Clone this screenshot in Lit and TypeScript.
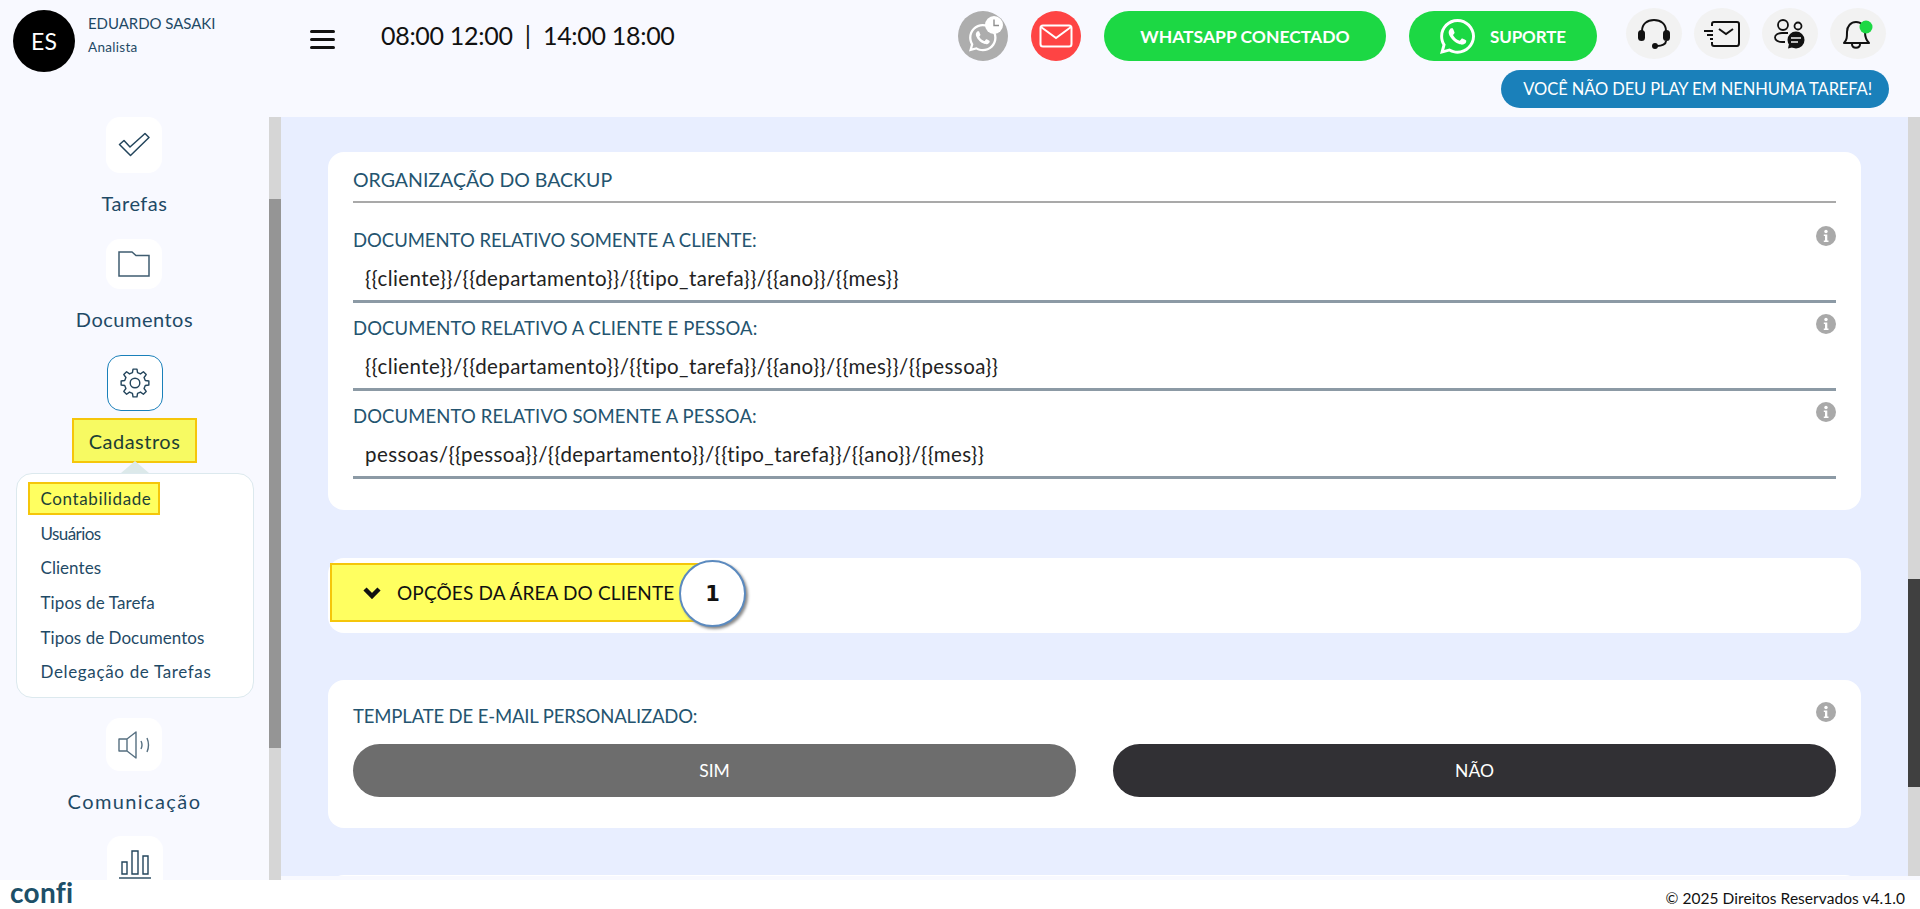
import { LitElement, html, css } from "lit";
import { customElement } from "lit/decorators.js";
import { styleMap } from "lit/directives/style-map.js";

const WA = "M380.9 97.1C339 55.1 283.2 32 223.9 32c-122.4 0-222 99.6-222 222 0 39.1 10.2 77.3 29.6 111L0 480l117.7-30.9c32.4 17.7 68.9 27 106.1 27h.1c122.3 0 224.1-99.6 224.1-222 0-59.3-25.2-115-67.1-157zm-157 341.6c-33.2 0-65.7-8.9-94-25.7l-6.7-4-69.8 18.3L72 359.2l-4.4-7c-18.5-29.4-28.2-63.3-28.2-98.2 0-101.7 82.8-184.5 184.6-184.5 49.3 0 95.6 19.2 130.4 54.1 34.8 34.9 56.2 81.2 56.1 130.5 0 101.8-84.9 184.6-186.6 184.6zm101.2-138.2c-5.5-2.8-32.8-16.2-37.9-18-5.1-1.9-8.8-2.8-12.5 2.8-3.7 5.6-14.3 18-17.6 21.8-3.2 3.7-6.5 4.2-12 1.4-32.6-16.3-54-29.1-75.5-66-5.7-9.8 5.7-9.1 16.3-30.3 1.8-3.7.9-6.9-.5-9.7-1.4-2.8-12.5-30.1-17.1-41.2-4.5-10.8-9.1-9.3-12.5-9.5-3.2-.2-6.9-.2-10.6-.2-3.7 0-9.7 1.4-14.8 6.9-5.1 5.6-19.4 19-19.4 46.3 0 27.3 19.9 53.7 22.6 57.4 2.8 3.7 39.1 59.7 94.8 83.8 35.2 15.2 49 16.5 66.6 13.9 10.7-1.6 32.8-13.4 37.4-26.4 4.6-13 4.6-24.1 3.2-26.4-1.3-2.5-5-3.9-10.5-6.6z";

function gearPath(): string {
  const teeth = 8, ro = 14, ri = 10.6, pts: string[] = [];
  for (let i = 0; i < teeth; i++) {
    const a = (i / teeth) * Math.PI * 2 - Math.PI / 2;
    const w = Math.PI / teeth;
    const p = (r: number, t: number) => `${(15 + r * Math.cos(t)).toFixed(2)} ${(15 + r * Math.sin(t)).toFixed(2)}`;
    pts.push(p(ri, a - w * 0.62), p(ro, a - w * 0.36), p(ro, a + w * 0.36), p(ri, a + w * 0.62));
  }
  return "M" + pts.join("L") + "Z";
}

const icCheck = html`<svg width="32" height="26" viewBox="0 0 32 26"><path d="M1.500 12.500 L6 8.500 L12 15 L27 1.500 L31 5.500 L12.500 23.500 Z" fill="none" stroke="#23455c" stroke-width="1.500" stroke-linejoin="round"/></svg>`;
const icFolder = html`<svg width="32" height="26" viewBox="0 0 32 26"><path d="M1 25 V1 H14 L18 4.500 H31 V25 Z" fill="none" stroke="#3f5c70" stroke-width="1.500"/></svg>`;
const icGear = html`<svg width="30" height="30" viewBox="0 0 30 30"><path d="${gearPath()}" fill="none" stroke="#23455c" stroke-width="1.400" stroke-linejoin="round"/><circle cx="15" cy="15" r="4.800" fill="none" stroke="#23455c" stroke-width="1.400"/></svg>`;
const icSpeaker = html`<svg width="32" height="28" viewBox="0 0 32 28"><path d="M1 8 H9 L18 1 V27 L9 20 H1 Z M9 8 V20" fill="none" stroke="#566f80" stroke-width="1.400" stroke-linejoin="round"/><path d="M23 10 Q25 14 23 18 M29 7 Q32 14 29 21" fill="none" stroke="#566f80" stroke-width="1.400"/></svg>`;
const icBars = html`<svg width="32" height="30" viewBox="0 0 32 30"><path d="M3 13 H8 V25 H3 Z M13 2 H19 V25 H13 Z M24 7 H29 V25 H24 Z" fill="none" stroke="#23455c" stroke-width="1.400"/><path d="M0 29 H32" stroke="#23455c" stroke-width="1.400"/></svg>`;
const icInfo = html`<svg class="info" width="20" height="20" viewBox="0 0 20 20"><circle cx="10" cy="10" r="10" fill="#a9a9a9"/><circle cx="10" cy="5.500" r="1.700" fill="#fff"/><path d="M7.800 8.500 H11.300 V14.500 H12.500 V16 H7.800 V14.500 H9 V10 H7.800 Z" fill="#fff"/></svg>`;

const nav: [string, number][] = [["Contabilidade", 0.62], ["Usuários", -0.57], ["Clientes", 0.05], ["Tipos de Tarefa", 0.1], ["Tipos de Documentos", 0.03], ["Delegação de Tarefas", 0.65]];
const fields: [string, string, number][] = [
  ["DOCUMENTO RELATIVO SOMENTE A CLIENTE:", "{{cliente}}/{{departamento}}/{{tipo_tarefa}}/{{ano}}/{{mes}}", -0.03],
  ["DOCUMENTO RELATIVO A CLIENTE E PESSOA:", "{{cliente}}/{{departamento}}/{{tipo_tarefa}}/{{ano}}/{{mes}}/{{pessoa}}", 0.1],
  ["DOCUMENTO RELATIVO SOMENTE A PESSOA:", "pessoas/{{pessoa}}/{{departamento}}/{{tipo_tarefa}}/{{ano}}/{{mes}}", 0.1],
];

@customElement("app-root")
export class AppRoot extends LitElement {
  static styles = css`
    :host { display: block; width: 1920px; height: 909px; background: #f8f9ff; font-family: Lato, "Liberation Sans", sans-serif; color: #1f4a66; }
    * { box-sizing: border-box; }
    .header { height: 117px; display: flex; flex-direction: column; padding: 8px 31px 0 13px; }
    .top { display: flex; align-items: flex-start; height: 62px; }
    .avatar { width: 62px; height: 62px; border-radius: 50%; background: #000; color: #fff; display: flex; align-items: center; justify-content: center; font-size: 23px; margin-top: 2px; }
    .who { margin-left: 13px; width: 222px; padding-top: 5px; }
    .name { font-size: 15px; line-height: 20px; letter-spacing: -0.05px; }
    .role { font-size: 13.500px; line-height: 20px; margin-top: 4px; letter-spacing: 0.3px; }
    .burger { width: 25px; display: flex; flex-direction: column; gap: 5px; margin-top: 22px; }
    .burger span { height: 3px; background: #111; border-radius: 2px; }
    .time { margin-left: 46px; width: 577px; font-size: 25px; line-height: 54px; color: #111; white-space: pre; letter-spacing: -0.3px; }
    .round { width: 50px; height: 50px; border-radius: 50%; display: flex; align-items: center; justify-content: center; margin-top: 3px; flex: none; }
    .clock { background: #adadad; }
    .mail { background: #fe4444; margin-left: 23px; }
    .pill { height: 50px; border-radius: 25px; background: #1cd844; color: #fff; font-weight: 700; display: flex; align-items: center; justify-content: center; font-size: 17.500px; margin-top: 3px; flex: none; }
    .pill.wa { width: 282px; margin-left: 23px; }
    .pill.sup { width: 188px; margin-left: 23px; gap: 15px; font-size: 17px; letter-spacing: -0.1px; }
    .tools { display: flex; gap: 12px; margin-left: 29px; }
    .tool { width: 56px; height: 51px; border-radius: 50%; background: #f2f2f2; display: flex; align-items: center; justify-content: center; }
    .alert { align-self: flex-end; height: 38px; width: 388px; border-radius: 19px; background: #1a80ba; color: #fff; font-size: 16.500px; display: flex; align-items: center; justify-content: flex-end; padding-right: 17px; letter-spacing: -0.1px; white-space: nowrap; }
    .body { display: flex; height: 763px; align-items: flex-start; }
    .side { width: 269px; height: 763px; overflow: hidden; display: flex; flex-direction: column; align-items: center; }
    .item { display: flex; flex-direction: column; align-items: center; margin-bottom: 4px; flex: none; }
    .item.open { margin-bottom: 0; }
    .tile { width: 56px; height: 56px; border-radius: 14px; background: #fff; display: flex; align-items: center; justify-content: center; flex: none; }
    .tile.h50 { height: 50px; }
    .tile.h53 { height: 53px; }
    .tile.on { border: 1px solid #1a80ba; }
    .lbl { height: 60px; margin-bottom: 2px; display: flex; align-items: center; font-size: 20px; letter-spacing: 0.5px; }
    .lbl.wide { letter-spacing: 1.4px; margin-bottom: 1px; }
    .hl { background: #f7fa62; border: 2px solid #f5c60a; }
    .sel { margin-top: 7px; width: 125px; height: 45px; display: flex; align-items: center; justify-content: center; font-size: 20px; color: #1d3f35; letter-spacing: 0.5px; position: relative; }
    .arrow { width: 0; height: 0; border-left: 14px solid transparent; border-right: 14px solid transparent; border-bottom: 12px solid #dce9ea; margin-top: -2px; position: relative; }
    .menu { width: 238px; height: 225px; margin: 0 0 20px; background: #fff; border: 1px solid #dce9ee; border-radius: 16px; padding: 8px 11px; display: flex; flex-direction: column; }
    .menu div { height: 34.600px; display: flex; align-items: center; padding-left: 13px; font-size: 17px; flex: none; white-space: nowrap; }
    .menu div.hl { width: 132px; height: 33px; margin-bottom: 1px; background: #ffff60; color: #1d3f35; padding-left: 11px; }
    .sb { width: 12px; height: 763px; background: #d6d6d6; flex: none; padding-top: 82px; }
    .sb i { display: block; width: 12px; height: 549px; background: #959595; }
    .main { width: 1627px; height: 759px; background: #e8eeff; overflow: hidden; padding: 35px 47px 0 47px; flex: none; }
    .sb2 { width: 12px; height: 759px; background: #d6d6d6; flex: none; padding-top: 462px; }
    .sb2 i { display: block; width: 12px; height: 208px; background: #404040; }
    .card { background: #fff; border-radius: 16px; width: 1533px; }
    .c1 { height: 358px; padding: 0 25px; margin-bottom: 48px; }
    .title { height: 51px; border-bottom: 2px solid #a9a9a9; padding-top: 17px; font-size: 19.500px; line-height: 22px; color: #24546f; margin-bottom: 12px; }
    .field { height: 88px; padding-top: 14px; border-bottom: 3px solid #8c9aa5; }
    .row { display: flex; justify-content: space-between; align-items: flex-start; height: 24px; }
    .row b { font-weight: 400; font-size: 18.500px; line-height: 22px; color: #24546f; }
    .row b.tight { letter-spacing: -0.15px; }
    .info { margin-top: -3px; flex: none; }
    .val { padding: 13px 0 0 12px; font-size: 20.500px; line-height: 24px; color: #222; letter-spacing: 0.42px; }
    .c2 { height: 75px; margin-bottom: 47px; padding: 5px 0 0 2px; position: relative; }
    .acc { width: 370px; height: 59px; background: #ffff60; border: 2px solid #f5c60a; display: flex; align-items: center; padding-left: 31px; gap: 16px; color: #111; font-size: 19px; letter-spacing: 0.15px; white-space: nowrap; }
    .badge { position: absolute; left: 351px; top: 2px; width: 67px; height: 67px; border-radius: 50%; background: #fff; border: 2px solid #5b8abf; box-shadow: 2px 2px 3px #8a8a8a; display: flex; align-items: center; justify-content: center; font-family: "DejaVu Sans", sans-serif; font-weight: 700; font-size: 21px; color: #111; }
    .c3 { height: 148px; margin-bottom: 47px; padding: 25px 25px 0; }
    .btns { display: grid; grid-template-columns: 723px 723px; column-gap: 37px; margin-top: 15px; }
    .btn { height: 53px; border-radius: 27px; color: #fff; display: flex; align-items: center; justify-content: center; font-size: 17.500px; }
    .sim { background: #6d6d6d; }
    .nao { background: #313034; }
    .c4 { height: 100px; }
    .footer { height: 29px; background: #fff; display: flex; align-items: center; justify-content: space-between; padding: 0 15px 0 10px; }
    .logo { font-size: 28px; line-height: 24px; color: #1d5068; font-weight: 700; letter-spacing: 0.3px; margin-bottom: 5px; }
    .copy { font-size: 15.500px; color: #111; letter-spacing: 0.05px; padding-top: 6px; }
  `;

  render() {
    return html`
      <div class="header">
        <div class="top">
          <div class="avatar">ES</div>
          <div class="who"><div class="name">EDUARDO SASAKI</div><div class="role">Analista</div></div>
          <div class="burger"><span></span><span></span><span></span></div>
          <div class="time">08:00 12:00  |  14:00 18:00</div>
          <div class="round clock">
            <svg width="50" height="50" viewBox="0 0 50 50"><g transform="translate(11 11) scale(0.0615)"><path d="${WA}" fill="#fff"/></g><circle cx="36" cy="14" r="9" fill="#fff"/><path d="M36 8.500 V14.500 H41" fill="none" stroke="#8f8f8f" stroke-width="1.400"/></svg>
          </div>
          <div class="round mail">
            <svg width="34" height="24" viewBox="0 0 34 24"><rect x="1.500" y="1.500" width="31" height="21" rx="2.500" fill="none" stroke="#fff" stroke-width="2"/><path d="M2 3 L17 14 L32 3" fill="none" stroke="#fff" stroke-width="2"/></svg>
          </div>
          <div class="pill wa">WHATSAPP CONECTADO</div>
          <div class="pill sup"><svg width="35" height="35" viewBox="0 32 448 448"><path d="${WA}" fill="#fff"/></svg>SUPORTE</div>
          <div class="tools">
            <div class="tool"><svg width="34" height="30" viewBox="0 0 34 30"><path d="M5 14 V12 C5 5 10 1 17 1 C24 1 29 5 29 12 V14" fill="none" stroke="#111" stroke-width="2"/><rect x="1" y="11" width="7" height="11" rx="3.500" fill="#111"/><rect x="26" y="11" width="7" height="11" rx="3.500" fill="#111"/><path d="M29 22 C29 25 25 27 20 27" fill="none" stroke="#111" stroke-width="2"/><circle cx="18" cy="27" r="3" fill="#111"/></svg></div>
            <div class="tool"><svg width="36" height="26" viewBox="0 0 36 26"><path d="M8 5 V3 C8 2 9 1 10 1 H33 C34 1 35 2 35 3 V22 C35 24 34 25 33 25 H10 C9 25 8 24 8 23 V21" fill="none" stroke="#111" stroke-width="2"/><path d="M15 8 L22 13 L29 8" fill="none" stroke="#111" stroke-width="2"/><path d="M0 10 H9 M3 14 H9 M6 18 H9" stroke="#111" stroke-width="2"/></svg></div>
            <div class="tool"><svg width="32" height="30" viewBox="0 0 32 30"><circle cx="9" cy="6" r="5" fill="none" stroke="#111" stroke-width="1.800"/><circle cx="24" cy="7" r="3.500" fill="none" stroke="#111" stroke-width="1.800"/><path d="M14 14 H8 C4 14 1 16 1 18.500 C1 21 4 23 8 23 H11" fill="none" stroke="#111" stroke-width="1.800"/><circle cx="22" cy="21" r="8.500" fill="#111"/><path d="M15 25 L14 29.500 L20 28 Z" fill="#111"/><path d="M17 19 H27 M17 23 H24" stroke="#f2f2f2" stroke-width="1.600"/></svg></div>
            <div class="tool"><svg width="34" height="32" viewBox="0 0 34 32"><path d="M3 25 C6 22 6 19 6 14 C6 8 10 4 15 4 C20 4 24 8 24 14 C24 19 25 22 28 25 Z" fill="none" stroke="#111" stroke-width="2" stroke-linejoin="round"/><path d="M11 26 C11 31 19 31 19 26" fill="none" stroke="#111" stroke-width="2"/><circle cx="25" cy="9" r="6.500" fill="#1cd844"/></svg></div>
          </div>
        </div>
        <div class="alert">VOCÊ NÃO DEU PLAY EM NENHUMA TAREFA!</div>
      </div>
      <div class="body">
        <div class="side">
          <div class="item"><div class="tile">${icCheck}</div><div class="lbl">Tarefas</div></div>
          <div class="item"><div class="tile h50">${icFolder}</div><div class="lbl">Documentos</div></div>
          <div class="item open">
            <div class="tile on">${icGear}</div>
            <div class="sel hl">Cadastros</div>
            <div class="arrow"></div>
            <div class="menu">${nav.map(([n, s], i) => html`<div class=${i === 0 ? "hl" : ""} style=${styleMap({ letterSpacing: s + "px" })}>${n}</div>`)}</div>
          </div>
          <div class="item"><div class="tile h53">${icSpeaker}</div><div class="lbl wide">Comunicação</div></div>
          <div class="item"><div class="tile">${icBars}</div></div>
        </div>
        <div class="sb"><i></i></div>
        <div class="main">
          <div class="card c1">
            <div class="title">ORGANIZAÇÃO DO BACKUP</div>
            ${fields.map(f => html`<div class="field"><div class="row"><b style=${styleMap({ letterSpacing: f[2] + "px" })}>${f[0]}</b>${icInfo}</div><div class="val">${f[1]}</div></div>`)}
          </div>
          <div class="card c2">
            <div class="acc"><svg width="18" height="13" viewBox="0 0 18 13"><path d="M2 3 L9 10 L16 3" fill="none" stroke="#111" stroke-width="4.500"/></svg>OPÇÕES DA ÁREA DO CLIENTE</div>
            <div class="badge">1</div>
          </div>
          <div class="card c3">
            <div class="row"><b class="tight">TEMPLATE DE E-MAIL PERSONALIZADO:</b>${icInfo}</div>
            <div class="btns"><div class="btn sim">SIM</div><div class="btn nao">NÃO</div></div>
          </div>
          <div class="card c4"></div>
        </div>
        <div class="sb2"><i></i></div>
      </div>
      <div class="footer"><div class="logo">confi</div><div class="copy">© 2025 Direitos Reservados v4.1.0</div></div>
    `;
  }
}
